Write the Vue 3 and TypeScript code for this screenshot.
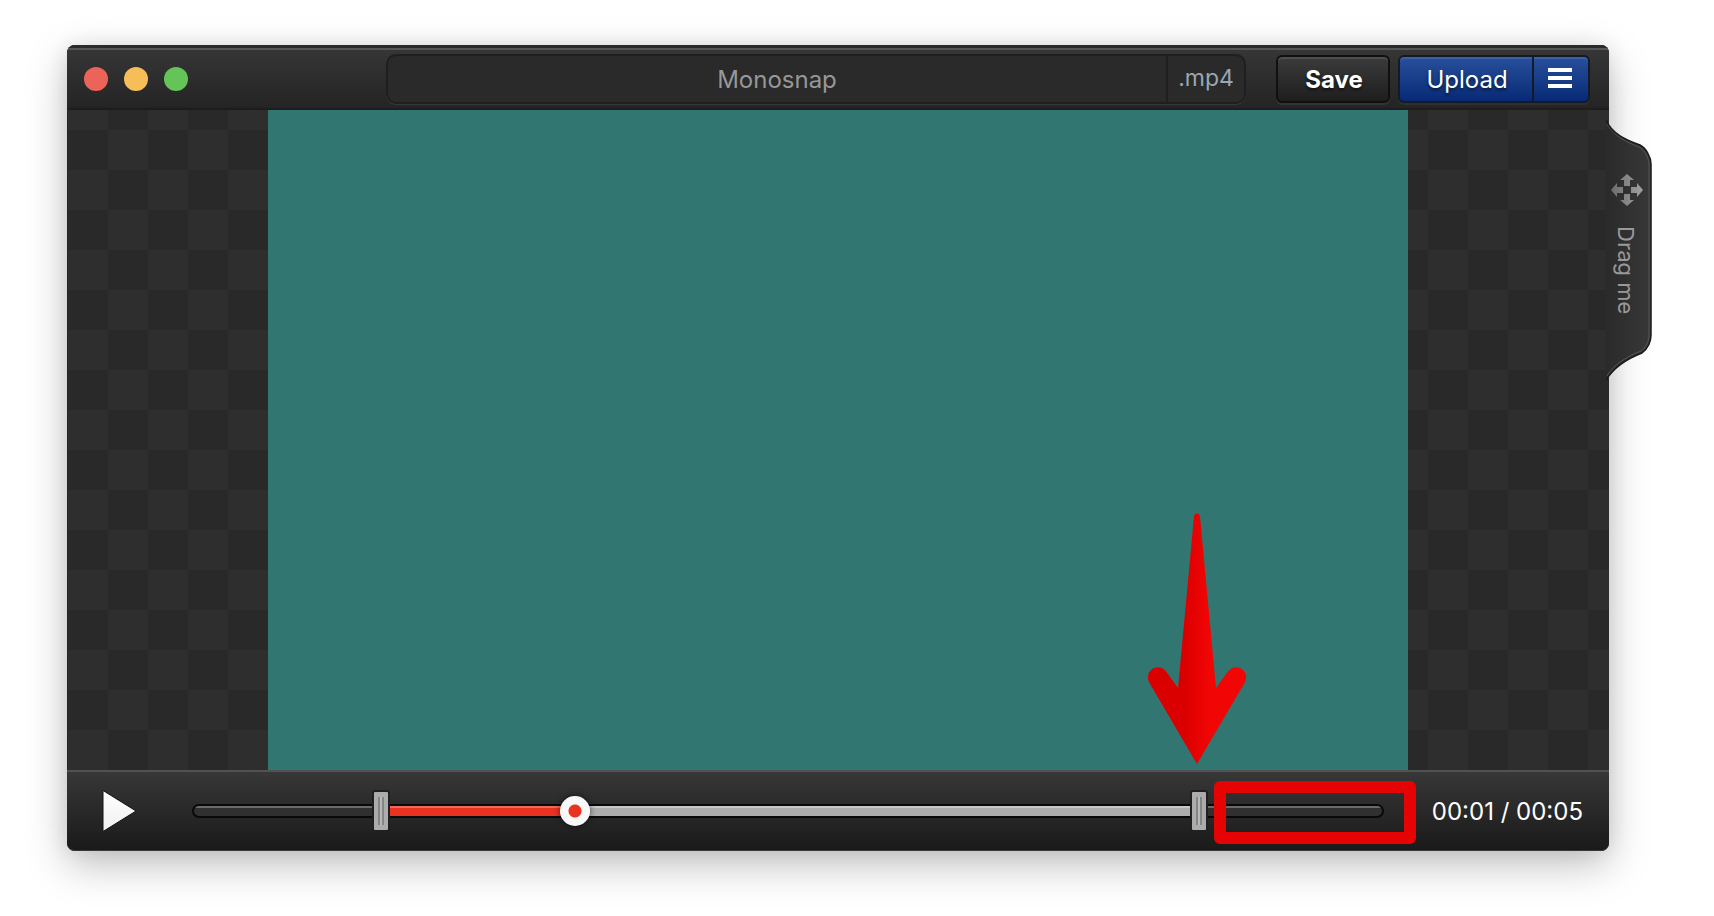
<script setup lang="ts">
import { computed, ref } from 'vue'

const duration = 5000
const title = ref('Monosnap')
const playing = ref(false)
const start = ref(767)
const end = ref(4250)
const current = ref(1583)

const HANDLE = 18
const KNOB = 30

/** Horizontal centre of a range thumb, as a CSS length inside the track. */
function thumbCentre(value: number, thumb: number): string {
  return `calc(${thumb / 2}px + (100% - ${thumb}px) * ${value / duration})`
}

function clock(ms: number): string {
  const seconds = Math.floor(ms / 1000)
  const pad = (n: number) => String(n).padStart(2, '0')
  return `${pad(Math.floor(seconds / 60))}:${pad(seconds % 60)}`
}

const trackStyle = computed(() => ({
  '--start': thumbCentre(start.value, HANDLE),
  '--end': thumbCentre(end.value, HANDLE),
  '--current': thumbCentre(current.value, KNOB),
}))
</script>

<template>
  <main class="desktop">
    <section class="window">
      <header class="titlebar">
        <div class="lights">
          <button class="light close" type="button" aria-label="Close"></button>
          <button class="light minimise" type="button" aria-label="Minimise"></button>
          <button class="light zoom" type="button" aria-label="Zoom"></button>
        </div>
        <div class="filename">
          <input v-model="title" class="name" type="text" aria-label="File name" />
          <span class="extension">.mp4</span>
        </div>
        <button class="btn save" type="button">Save</button>
        <div class="upload-group">
          <button class="btn upload" type="button">Upload</button>
          <button class="btn menu" type="button" aria-label="Upload menu">
            <svg width="24" height="20" viewBox="0 0 24 20" fill="#fff">
              <path d="M0 0h24v4H0zM0 8h24v4H0zM0 16h24v4H0z" />
            </svg>
          </button>
        </div>
      </header>

      <div class="stage">
        <div class="video"></div>
      </div>

      <footer class="controls">
        <button class="play" type="button" aria-label="Play" @click="playing = !playing">
          <svg width="36" height="44" viewBox="0 0 36 44">
            <defs>
              <linearGradient id="playFill" x1="0" y1="0" x2="0" y2="1">
                <stop offset="0" stop-color="#fff" />
                <stop offset="1" stop-color="#f0f0f0" />
              </linearGradient>
            </defs>
            <path d="M2 1.500L35 22L2 42.500z" fill="url(#playFill)" stroke="#141414" stroke-width="1" />
          </svg>
        </button>

        <div class="timeline" :style="trackStyle">
          <div class="track">
            <div class="fill selected"></div>
            <div class="fill played"></div>
          </div>
          <input v-model.number="start" class="range handle" type="range" min="0" :max="duration" aria-label="Trim start" />
          <input v-model.number="end" class="range handle" type="range" min="0" :max="duration" aria-label="Trim end" />
          <input v-model.number="current" class="range knob" type="range" min="0" :max="duration" aria-label="Position" />
          <div class="highlight"></div>
          <svg class="arrow" width="98" height="252" viewBox="0 0 98 252">
            <defs>
              <linearGradient id="arrowFill" x1="0" y1="0" x2="1" y2="0">
                <stop offset="0.36" stop-color="#da0000" />
                <stop offset="0.62" stop-color="#f20505" />
              </linearGradient>
            </defs>
            <path
              d="M46 3.500C46.200 -0.500 51.800 -0.500 52 3.500L68 175L79.500 159C88 148 103 158 96.500 170L49 251L1.500 170C-5 158 10 148 18.500 159L30 175z"
              fill="url(#arrowFill)"
            />
          </svg>
        </div>

        <div class="time">{{ clock(current) }} / {{ clock(duration) }}</div>
      </footer>

      <button class="drag-tab" type="button">
        <svg class="tab-shape" width="46" height="264" viewBox="0 0 46 264">
          <defs>
            <linearGradient id="tabFill" x1="0" y1="0" x2="1" y2="0">
              <stop offset="0" stop-color="#2a2a2a" />
              <stop offset="1" stop-color="#383838" />
            </linearGradient>
          </defs>
          <path d="M0 0C6 14 20 20 34 25C40 28 45 37 45 44V215C45 223 41 229 36 233C23 238 8 247 0 260z" fill="url(#tabFill)" />
          <path d="M1 4C8 16 20 22 33 27C39 30 43 39 43 44V215C43 222 39 228 35 231C22 236 8 244 1 256" fill="none" stroke="#565656" stroke-width="1" />
          <path d="M0 0C6 14 20 20 34 25C40 28 45 37 45 44V215C45 223 41 229 36 233C23 238 8 247 0 260" fill="none" stroke="#1b1b1b" stroke-width="1.500" />
        </svg>
        <svg class="move" width="32" height="32" viewBox="0 0 32 32">
          <defs>
            <linearGradient id="moveFill" x1="0" y1="0" x2="1" y2="0">
              <stop offset="0" stop-color="#6c6c6c" />
              <stop offset="1" stop-color="#a0a0a0" />
            </linearGradient>
          </defs>
          <path
            d="M16 0L23 6H19V12H13V6H9zM32 16L26 23V19H20V13H26V9zM16 32L9 26H13V20H19V26H23zM0 16L6 9V13H12V19H6V23z"
            fill="url(#moveFill)"
          />
        </svg>
        <span class="tab-label">Drag me</span>
      </button>
    </section>
  </main>
</template>

<style>
body {
  margin: 0;
  background: #fff;
}
</style>

<style scoped>
.desktop {
  padding: 45px 105px 64px 67px;
  font-family: Inter, "Liberation Sans", sans-serif;
  font-size: 24px;
  color: #fff;
  overflow: hidden;
}

.desktop *,
.desktop *::before {
  box-sizing: border-box;
}

button,
input {
  margin: 0;
  padding: 0;
  border: 0;
  font: inherit;
  color: inherit;
  background: none;
}

.window {
  position: relative;
  border-radius: 8px;
  background: #1c1c1c;
  box-shadow: 0 14px 40px rgba(0, 0, 0, 0.25), 0 0 20px rgba(0, 0, 0, 0.08);
}

.titlebar {
  display: flex;
  align-items: center;
  height: 65px;
  padding: 5px 19px 0 17px;
  border-bottom: 2px solid #1d1d1d;
  border-radius: 8px 8px 0 0;
  background:
    linear-gradient(#2a2a2a 0 3px, #555 3px 5px, transparent 5px),
    linear-gradient(#373737, #242424);
}

.lights {
  display: flex;
  gap: 16px;
  margin-right: 198px;
}

.light {
  width: 24px;
  height: 24px;
  border-radius: 50%;
}

.close {
  background: #ec6459;
}

.minimise {
  background: #f5be58;
}

.zoom {
  background: #65c458;
}

.filename {
  display: flex;
  flex: 1;
  min-width: 0;
  height: 50px;
  margin-right: 30px;
  border: 2px solid #1f1f1f;
  border-radius: 10px;
  background: #2a2a2a;
  box-shadow: 0 1px 1px #3a3a3a;
}

.name {
  flex: 1;
  min-width: 0;
  text-align: center;
  color: #979797;
}

.extension {
  width: 78px;
  border-left: 2px solid #1f1f1f;
  line-height: 44px;
  text-align: center;
  font-size: 23px;
  color: #98a8b2;
}

.btn {
  height: 48px;
  border: 2px solid #101010;
  border-radius: 6px;
  text-shadow: 0 2px 3px rgba(0, 0, 0, 0.6);
}

.save {
  width: 114px;
  margin-right: 8px;
  padding-left: 2px;
  background: linear-gradient(#3b3b3b, #1e1e1e);
  box-shadow: inset 0 2px 0 #4d4d4d, 0 2px 0 #343434;
  font-weight: 700;
}

.upload-group {
  display: flex;
}

.upload,
.menu {
  border-color: #141a26;
  background: linear-gradient(#28509c, #082a76);
  box-shadow: inset 0 2px 0 #3c60a8, 0 2px 0 #303030;
}

.upload {
  width: 135px;
  padding-left: 2px;
  border-right-width: 1px;
  border-radius: 6px 0 0 6px;
}

.menu {
  display: flex;
  align-items: center;
  justify-content: center;
  width: 57px;
  padding: 0 2px 2px 0;
  border-left-width: 1px;
  border-radius: 0 6px 6px 0;
}

.stage {
  padding: 0 201px 0 200px;
  border-left: 1px solid #242424;
  background: repeating-conic-gradient(#2e2e2e 0 25%, #292929 0 50%) 0 20px / 80px 80px;
}

.video {
  aspect-ratio: 19 / 11;
  background: #317670;
}

.controls {
  display: flex;
  align-items: center;
  height: 81px;
  padding: 0 26px 0 34px;
  border-top: 2px solid #525252;
  border-bottom: 1px solid #383838;
  border-radius: 0 0 8px 8px;
  background: linear-gradient(#373737, #1a1a1a);
}

.play {
  display: flex;
  margin-right: 55px;
}

.timeline {
  position: relative;
  flex: 1;
  height: 40px;
  margin-right: 48px;
}

.track {
  position: relative;
  height: 14px;
  margin: 13px 0;
  border: 2px solid #090909;
  border-radius: 7px;
  background: linear-gradient(#6a6a6a 0 2px, #303030 2px);
}

.fill {
  position: absolute;
  top: 0;
  bottom: 0;
  left: var(--start);
}

.selected {
  right: calc(100% - var(--end));
  background: linear-gradient(#c8c8c8 0 2px, #adadad 2px);
}

.played {
  right: calc(100% - var(--current));
  background: linear-gradient(#f06a58 0 2px, #ea3223 2px);
}

.range {
  position: absolute;
  inset: 0;
  width: 100%;
  height: 40px;
  appearance: none;
  pointer-events: none;
}

.range::-webkit-slider-thumb {
  appearance: none;
  box-sizing: border-box;
  pointer-events: auto;
}

.handle::-webkit-slider-thumb {
  width: 18px;
  height: 42px;
  border: 2px solid #202020;
  border-radius: 3px;
  background:
    linear-gradient(90deg, #858585 0 2px, #b8b8b8 2px 4px, #858585 4px 6px) center / 6px 28px no-repeat,
    #acacac;
}

.knob::-webkit-slider-thumb {
  width: 30px;
  height: 30px;
  border-radius: 50%;
  background: radial-gradient(circle, #ea3223 0 6px, #f8f8f8 7px);
  box-shadow: 0 0 6px rgba(0, 0, 0, 0.6);
}

.highlight {
  position: absolute;
  top: -10px;
  right: -32px;
  left: calc(var(--end) + 15px);
  height: 63px;
  border: 12px solid #e60303;
  border-radius: 6px;
  pointer-events: none;
}

.arrow {
  position: absolute;
  bottom: 66px;
  left: calc(var(--end) - 51px);
  pointer-events: none;
}

.time {
  white-space: nowrap;
}

.drag-tab {
  position: absolute;
  top: 75px;
  left: calc(100% - 3px);
  display: flex;
  flex-direction: column;
  align-items: center;
  width: 46px;
  height: 264px;
  padding: 54px 4px 0 0;
  color: #999;
}

.tab-shape {
  position: absolute;
  inset: 0;
}

.move {
  position: relative;
  flex: none;
}

.tab-label {
  position: relative;
  margin-top: 20px;
  padding-right: 2px;
  writing-mode: vertical-rl;
  font-size: 22px;
  line-height: 28px;
  white-space: nowrap;
}
</style>
